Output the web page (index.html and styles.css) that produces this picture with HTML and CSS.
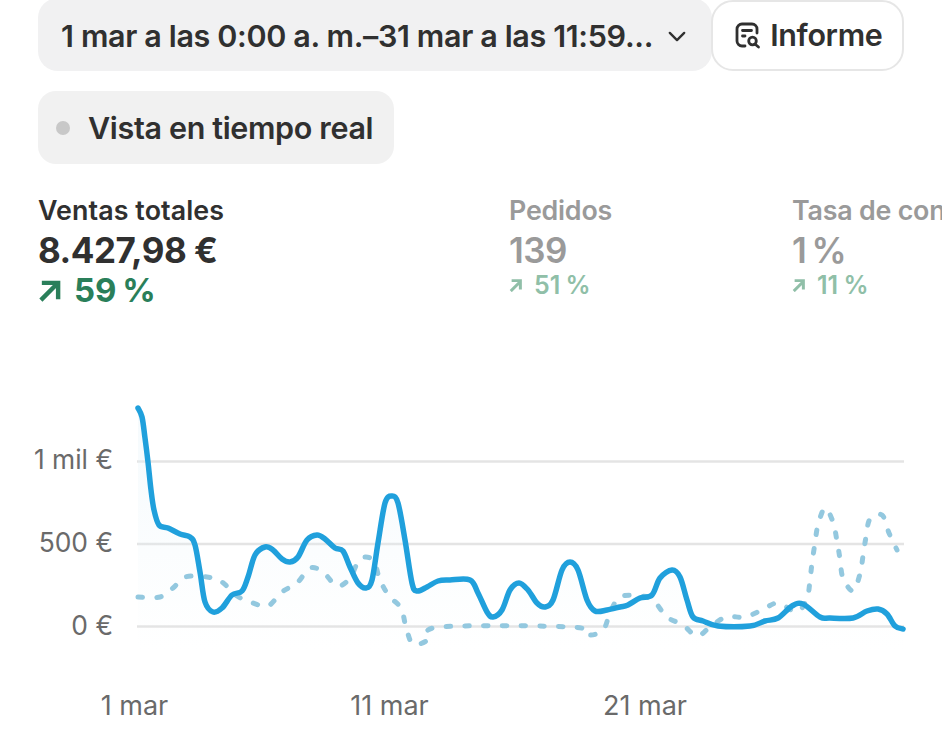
FILE: index.html
```html
<!DOCTYPE html>
<html lang="es">
<head>
<meta charset="utf-8">
<title>Ventas</title>
<link rel="stylesheet" href="styles.css">
</head>
<body>
<main class="page">
  <div class="toolbar">
    <button class="btn date-btn">
      <span class="date-text">1 mar a las 0:00 a. m.–31 mar a las 11:59...</span>
      <svg class="chev" viewBox="0 0 20 12" width="18" height="11"><path d="M2 2l8 8 8-8" fill="none" stroke="#303030" stroke-width="2.600" stroke-linecap="round" stroke-linejoin="round"/></svg>
    </button>
    <button class="btn report-btn">
      <svg class="report-icon" viewBox="0 0 26 27" width="26" height="27"><g fill="none" stroke="#303030" stroke-width="2.800" stroke-linecap="round" stroke-linejoin="round"><path d="M10 24H7a5 5 0 0 1-5-5V7a5 5 0 0 1 5-5h10a5 5 0 0 1 5 5v4"/><path d="M7.500 8.500h9M7.500 14h2.500"/><circle cx="17.500" cy="19" r="3.800"/><path d="M20.500 22.500l3 2.500"/></g></svg>
      <span>Informe</span>
    </button>
  </div>
  <div class="live">
    <span class="dot"></span>
    <span>Vista en tiempo real</span>
  </div>
  <section class="metrics">
    <div class="metric active">
      <div class="m-label">Ventas totales</div>
      <div class="m-value">8.427,98 €</div>
      <div class="m-delta"><svg viewBox="0 0 24 24" width="23" height="23"><path d="M3 22L20 5M4 4h17v17" fill="none" stroke="#2a7f5a" stroke-width="4.600"/></svg>59 %</div>
    </div>
    <div class="metric dim orders">
      <div class="m-label">Pedidos</div>
      <div class="m-value">139</div>
      <div class="m-delta"><svg viewBox="0 0 16 16" width="14" height="14"><path d="M2 15L13 4M3 3h10v10" fill="none" stroke="#90bfa8" stroke-width="3.400"/></svg>51 %</div>
    </div>
    <div class="metric dim">
      <div class="m-label">Tasa de conversión</div>
      <div class="m-value">1 %</div>
      <div class="m-delta"><svg viewBox="0 0 16 16" width="14" height="14"><path d="M2 15L13 4M3 3h10v10" fill="none" stroke="#90bfa8" stroke-width="3.400"/></svg>11 %</div>
    </div>
  </section>
  <svg class="chart" id="chart" viewBox="0 340 942 416" width="942" height="416">
    <defs>
      <linearGradient id="fade" x1="0" y1="0" x2="0" y2="1">
        <stop offset="0" stop-color="#e6f3f9" stop-opacity=".4"/>
        <stop offset="1" stop-color="#e6f3f9" stop-opacity="0"/>
      </linearGradient>
    </defs>
    <g class="grid">
      <line x1="137" x2="904" y1="461.500" y2="461.500"/>
      <line x1="137" x2="904" y1="544" y2="544"/>
      <line x1="137" x2="904" y1="626.500" y2="626.500"/>
    </g>
    <g class="axis-y">
      <text x="113" y="469">1 mil €</text>
      <text x="113" y="552">500 €</text>
      <text x="113" y="635">0 €</text>
    </g>
    <g class="axis-x">
      <text x="134.500" y="715">1 mar</text>
      <text x="389.500" y="715">11 mar</text>
      <text x="645" y="715">21 mar</text>
    </g>
    <path id="area" fill="url(#fade)"/>
    <path id="prev" class="line-prev"/>
    <path id="main" class="line-main"/>
  </svg>
</main>
<script src="chart.js"></script>
</body>
</html>
```
FILE: styles.css
```css
* { box-sizing: border-box; }
html, body { margin: 0; padding: 0; background: #fff; overflow: hidden; }
body { width: 942px; height: 756px; font-family: Inter, "Liberation Sans", sans-serif; color: #303030; }
.page { padding: 0 38px; }
.toolbar { display: flex; align-items: flex-start; height: 71px; width: 866px; }
.btn { font: 600 30.500px/1 Inter, "Liberation Sans", sans-serif; color: #303030; border: 0; display: flex; align-items: center; margin: 0; padding: 0; letter-spacing: -.35px; text-align: left; }
.date-btn { width: 675px; height: 73px; margin-top: -2px; margin-right: -1px; background: #f1f1f2; border-radius: 20px; padding: 3px 0 0 23px; }
.date-text { white-space: nowrap; width: 607px; flex: none; }
.report-btn { position: relative; width: 193px; height: 71px; background: #fff; border: 2px solid #e6e6e6; border-radius: 22px; padding-left: 22px; gap: 9px; }
.live { display: inline-flex; align-items: center; margin-top: 20px; height: 73px; width: 356px; background: #f1f1f1; border-radius: 18px; padding-left: 18px; gap: 18px; font-size: 30.500px; font-weight: 600; letter-spacing: -.35px; vertical-align: top; }
.dot { width: 14px; height: 14px; border-radius: 50%; background: #c8c8c8; }
.metrics { display: flex; margin-top: 31px; width: 904px; overflow: hidden; }
.metric { flex: none; width: 471px; white-space: nowrap; }
.metric.orders { width: 283px; }
.m-label { font-size: 26.800px; font-weight: 600; line-height: 30px; letter-spacing: -.2px; }
.active .m-label { letter-spacing: .1px; }
.m-value { font-size: 35px; font-weight: 700; line-height: 42px; margin-top: 4px; letter-spacing: -.5px; }
.dim .m-value { font-weight: 600; word-spacing: -3px; }
.m-delta { display: flex; align-items: center; font-weight: 700; color: #2a7f5a; }
.active .m-delta { font-size: 33px; line-height: 36px; gap: 13px; margin-top: 1px; word-spacing: -2px; }
.dim { color: #9a9a9a; }
.dim .m-delta { font-size: 25px; font-weight: 600; line-height: 30px; color: #90bfa8; gap: 11px; margin-top: -1px; word-spacing: -1px; }
.chart { display: block; position: absolute; left: 0; top: 340px; }
.grid line { stroke: #e4e4e4; stroke-width: 2.500; }
.axis-y text { font: 400 26.400px Inter, "Liberation Sans", sans-serif; fill: #6a6a6a; text-anchor: end; }
.axis-x text { font: 400 27px Inter, "Liberation Sans", sans-serif; fill: #6a6a6a; text-anchor: middle; }
.line-main { fill: none; stroke: #20a0dc; stroke-width: 5.500; stroke-linecap: round; stroke-linejoin: round; }
.line-prev { fill: none; stroke: #93c8df; stroke-width: 5; stroke-linecap: round; stroke-linejoin: round; stroke-dasharray: 4.500 14.200; }
```
FILE: chart.js
```js
var mainPts = [[138,408],[142,417],[145,438],[148,462],[151,490],[154,510],[159,525],[168,528],[180,534],[190,537],[195,545],[200,572],[205,602],[213,612],[222,608],[232,595],[242,591],[248,577],[255,555],[265,547],[273,550],[282,559],[290,562],[298,557],[307,540],[317,535],[325,539],[335,548],[343,551],[350,567],[358,583],[366,588],[372,580],[378,543],[385,503],[392,496],[398,503],[405,540],[412,583],[417,591],[427,587],[438,581],[450,580],[470,580],[478,593],[487,612],[493,617],[502,610],[510,590],[519,583],[528,590],[537,603],[545,607],[553,600],[562,570],[570,562],[578,570],[587,600],[595,611],[607,610],[620,607],[628,605],[640,598],[652,595],[660,578],[672,570],[680,577],[687,600],[693,617],[703,621],[718,626],[750,626],[765,621],[778,618],[792,606],[803,604],[820,617],[830,618],[853,618],[867,611],[878,609],[887,614],[895,626],[903,629]];
var prevPts = [[138,597],[160,597],[173,588],[185,577],[207,577],[222,582],[237,596],[253,603],[268,606],[282,592],[297,583],[310,568],[323,572],[337,586],[350,578],[360,559],[373,560],[380,580],[389,596],[401,608],[406,627],[413,644],[428,640],[440,627],[572,627],[588,635],[603,630],[610,613],[620,597],[640,596],[653,600],[667,617],[683,625],[697,636],[710,627],[726,617],[745,617],[762,610],[778,603],[797,612],[807,598],[810,580],[812,563],[815,543],[818,525],[825,508],[833,522],[837,541],[840,559],[843,578],[853,591],[860,574],[863,556],[866,537],[870,519],[882,515],[889,533],[897,550]];
function smooth(p) {
  var d = "M" + p[0][0] + " " + p[0][1];
  for (var i = 0; i < p.length - 1; i++) {
    var a = p[Math.max(i - 1, 0)], b = p[i], c = p[i + 1], e = p[Math.min(i + 2, p.length - 1)];
    d += "C" + (b[0] + (c[0] - a[0]) / 6).toFixed(1) + " " + (b[1] + (c[1] - a[1]) / 6).toFixed(1) + " " +
      (c[0] - (e[0] - b[0]) / 6).toFixed(1) + " " + (c[1] - (e[1] - b[1]) / 6).toFixed(1) + " " + c[0] + " " + c[1];
  }
  return d;
}
var m = smooth(mainPts);
document.getElementById("main").setAttribute("d", m);
document.getElementById("prev").setAttribute("d", smooth(prevPts));
document.getElementById("area").setAttribute("d", m + "L903 650L138 650Z");
```
